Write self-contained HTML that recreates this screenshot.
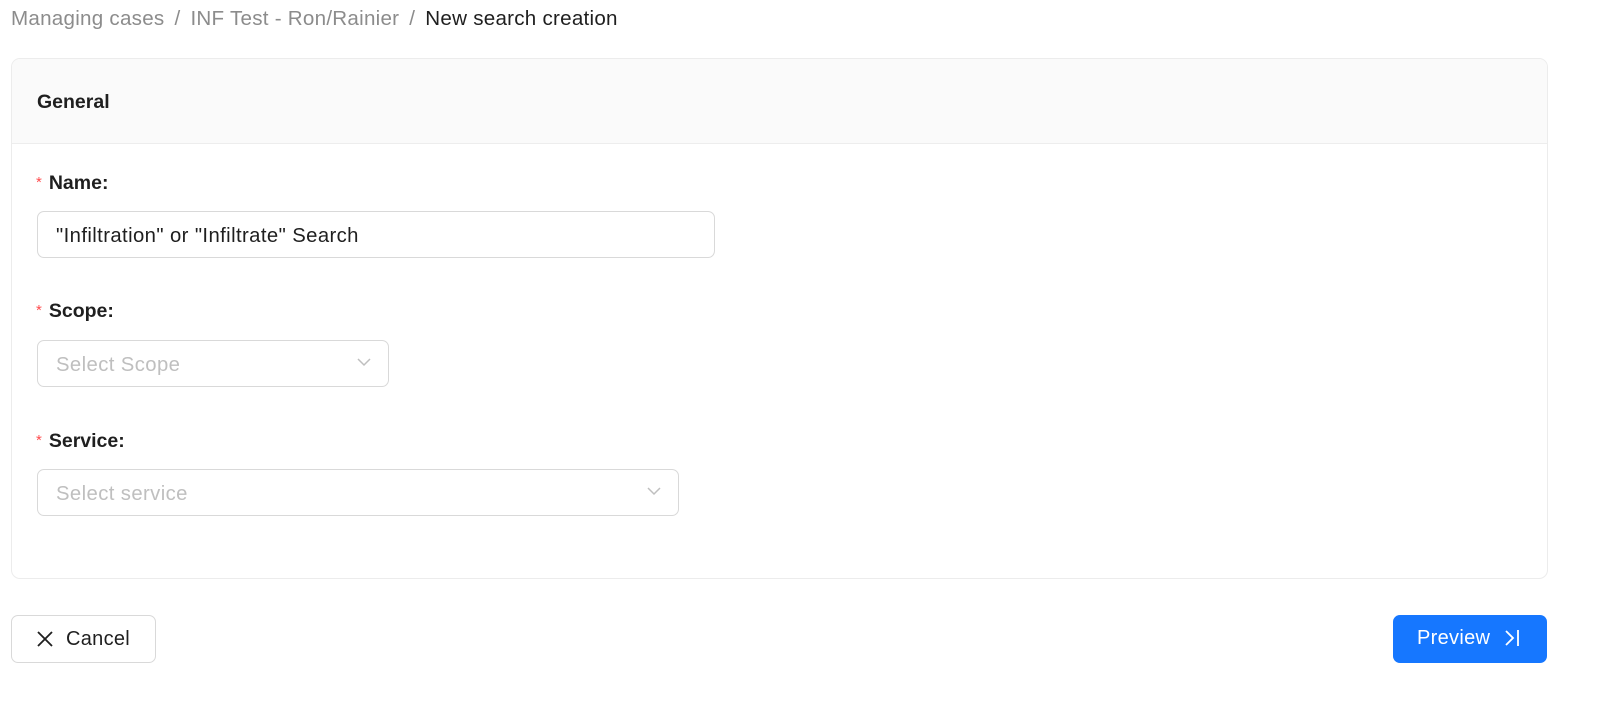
<!DOCTYPE html>
<html><head><style>
body{margin:0;width:1600px;height:720px;background:#fff;font-family:"Liberation Sans",Arial,sans-serif;color:#1f1f1f;position:relative;overflow:hidden}
.a{position:absolute}
.bc{left:11px;top:7px;font-size:20.6px;letter-spacing:.25px;color:#8c8c8c;white-space:nowrap}
.bc b{font-weight:normal;color:#1f1f1f}
.bc i{font-style:normal;margin:0 10px}
.card{left:11px;top:58px;width:1535px;height:519px;border:1px solid #ececec;border-radius:9px;overflow:hidden}
.hd{height:84px;background:#fafafa;border-bottom:1px solid #ededed;font-size:19.5px;padding-left:25px;line-height:86px;font-weight:bold}
.lbl{font-size:19.5px;font-weight:bold}
.lbl s{text-decoration:none;color:#ff4d4f;font-weight:normal;font-size:15px;margin-right:7px;position:relative;top:-2px}
.in{border:1px solid #d9d9d9;border-radius:7px;box-sizing:border-box;font-size:20.3px;letter-spacing:.4px;padding-left:18px;line-height:48px}
.ph{color:#bfbfbf}
.chev{position:absolute;right:17px;top:17px}
.btn{box-sizing:border-box;border-radius:7px;height:48px;font-size:20px;letter-spacing:.3px;line-height:46px}
</style></head><body>
<div class="a bc">Managing cases<i>/</i>INF Test - Ron/Rainier<i>/</i><b>New search creation</b></div>
<div class="a card"><div class="hd">General</div></div>
<div class="a lbl" style="left:36px;top:172px"><s>*</s>Name:</div>
<div class="a in" style="left:37px;top:211px;width:678px;height:47px">"Infiltration" or "Infiltrate" Search</div>
<div class="a lbl" style="left:36px;top:300px"><s>*</s>Scope:</div>
<div class="a in ph" style="left:37px;top:340px;width:352px;height:47px">Select Scope<svg class="chev" width="14" height="9" viewBox="0 0 14 9"><path d="M1 1l6 6 6-6" fill="none" stroke="#bfbfbf" stroke-width="1.5"/></svg></div>
<div class="a lbl" style="left:36px;top:430px"><s>*</s>Service:</div>
<div class="a in ph" style="left:37px;top:469px;width:642px;height:47px">Select service<svg class="chev" width="14" height="9" viewBox="0 0 14 9"><path d="M1 1l6 6 6-6" fill="none" stroke="#bfbfbf" stroke-width="1.5"/></svg></div>
<div class="a btn" style="left:11px;top:615px;width:145px;border:1px solid #d9d9d9;padding-left:25px"><svg width="16" height="16" viewBox="0 0 16 16" style="vertical-align:-2px;margin-right:13px"><path d="M1 1l14 14M15 1L1 15" stroke="#1f1f1f" stroke-width="1.8"/></svg>Cancel</div>
<div class="a btn" style="left:1393px;top:615px;width:154px;background:#1677ff;color:#fff;padding-left:24px">Preview<svg width="16" height="18" viewBox="0 0 16 18" style="vertical-align:-3px;margin-left:14px"><path d="M2 2l7 7-7 7M14 1v16" fill="none" stroke="#fff" stroke-width="1.8"/></svg></div>
</body></html>
